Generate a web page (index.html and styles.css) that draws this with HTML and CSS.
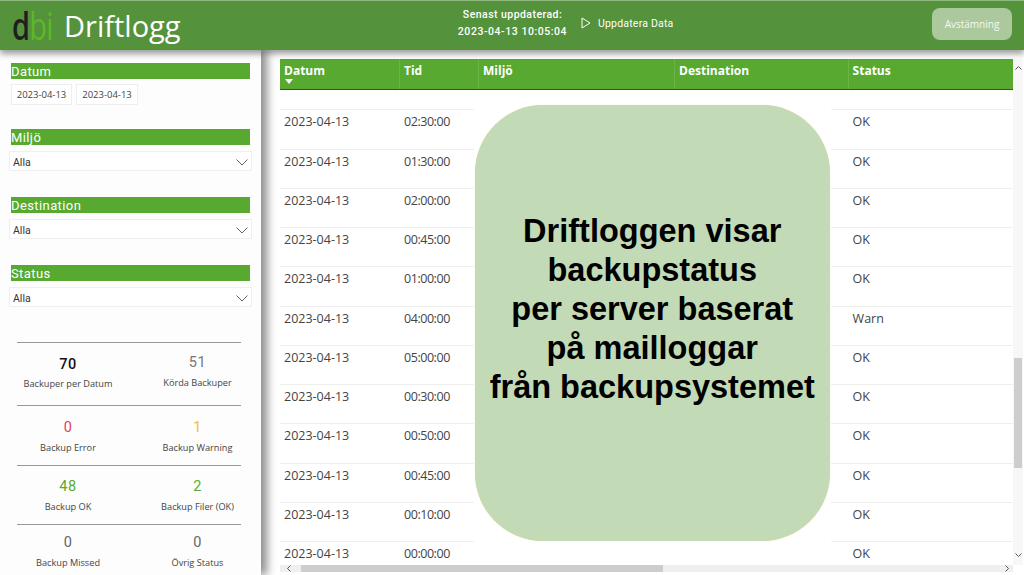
FILE: index.html
```html
<!DOCTYPE html>
<html lang="sv">
<head>
<meta charset="utf-8">
<title>Driftlogg</title>
<link rel="stylesheet" href="styles.css">
</head>
<body>
<header class="topbar">
  <div class="brand">
    <span class="logo"><span class="logo-inner"><span class="logo-d">d</span><span class="logo-bi">bi</span></span></span>
    <span class="title">Driftlogg</span>
  </div>
  <div class="updated">
    <div>Senast uppdaterad:</div>
    <div class="stamp">2023-04-13 10:05:04</div>
  </div>
  <div class="refresh">
    <svg class="play" width="10" height="12" viewBox="0 0 10 12"><path d="M1 1 L9 6 L1 11 Z" fill="none" stroke="#fff" stroke-width="1"/></svg>
    <span>Uppdatera Data</span>
  </div>
  <div class="recon">Avstämning</div>
</header>
<div class="content">
  <aside class="sidebar">
    <div class="slicer-title first">Datum</div>
    <div class="dates"><span class="date">2023-04-13</span><span class="date">2023-04-13</span></div>
    <div class="slicer-title miljo">Miljö</div>
    <div class="drop"><span>Alla</span><svg width="12" height="7" viewBox="0 0 12 7"><path d="M.5 .5 L6 6 L11.5 .5" fill="none" stroke="#666"/></svg></div>
    <div class="slicer-title next">Destination</div>
    <div class="drop"><span>Alla</span><svg width="12" height="7" viewBox="0 0 12 7"><path d="M.5 .5 L6 6 L11.5 .5" fill="none" stroke="#666"/></svg></div>
    <div class="slicer-title next">Status</div>
    <div class="drop"><span>Alla</span><svg width="12" height="7" viewBox="0 0 12 7"><path d="M.5 .5 L6 6 L11.5 .5" fill="none" stroke="#666"/></svg></div>
    <div class="kpis">
      <div class="kpi-row r1">
        <div class="kpi"><b class="v-black">70</b><span>Backuper per Datum</span></div>
        <div class="kpi"><b class="v-gray">51</b><span>Körda Backuper</span></div>
      </div>
      <div class="kpi-row r2">
        <div class="kpi"><b class="v-red">0</b><span>Backup Error</span></div>
        <div class="kpi"><b class="v-yellow">1</b><span>Backup Warning</span></div>
      </div>
      <div class="kpi-row r3">
        <div class="kpi"><b class="v-green">48</b><span>Backup OK</span></div>
        <div class="kpi"><b class="v-green">2</b><span>Backup Filer (OK)</span></div>
      </div>
      <div class="kpi-row r4">
        <div class="kpi"><b class="v-dark">0</b><span>Backup Missed</span></div>
        <div class="kpi"><b class="v-dark">0</b><span>Övrig Status</span></div>
      </div>
    </div>
  </aside>
  <main class="main">
    <div class="tablewrap">
      <div class="table">
        <div class="thead">
          <div class="th th-date">Datum<i class="sort"></i></div>
          <div class="th">Tid</div>
          <div class="th">Miljö</div>
          <div class="th">Destination</div>
          <div class="th">Status</div>
        </div>
        <div class="tbody">
          <div class="tr"><span>2023-04-13</span><span>02:30:00</span><span></span><span></span><span>OK</span></div>
          <div class="tr"><span>2023-04-13</span><span>01:30:00</span><span></span><span></span><span>OK</span></div>
          <div class="tr"><span>2023-04-13</span><span>02:00:00</span><span></span><span></span><span>OK</span></div>
          <div class="tr"><span>2023-04-13</span><span>00:45:00</span><span></span><span></span><span>OK</span></div>
          <div class="tr"><span>2023-04-13</span><span>01:00:00</span><span></span><span></span><span>OK</span></div>
          <div class="tr"><span>2023-04-13</span><span>04:00:00</span><span></span><span></span><span>Warn</span></div>
          <div class="tr"><span>2023-04-13</span><span>05:00:00</span><span></span><span></span><span>OK</span></div>
          <div class="tr"><span>2023-04-13</span><span>00:30:00</span><span></span><span></span><span>OK</span></div>
          <div class="tr"><span>2023-04-13</span><span>00:50:00</span><span></span><span></span><span>OK</span></div>
          <div class="tr"><span>2023-04-13</span><span>00:45:00</span><span></span><span></span><span>OK</span></div>
          <div class="tr"><span>2023-04-13</span><span>00:10:00</span><span></span><span></span><span>OK</span></div>
          <div class="tr"><span>2023-04-13</span><span>00:00:00</span><span></span><span></span><span>OK</span></div>
        </div>
      </div>
      <div class="vscroll">
        <svg class="arrow-up" width="7" height="4" viewBox="0 0 7 4"><path d="M.5 3.5 L3.5 .5 L6.5 3.5" fill="none" stroke="#555"/></svg>
        <div class="vthumb"></div>
        <svg class="arrow-down" width="7" height="4" viewBox="0 0 7 4"><path d="M.5 .5 L3.5 3.5 L6.5 .5" fill="none" stroke="#555"/></svg>
      </div>
    </div>
    <div class="hscroll">
      <svg width="4" height="7" viewBox="0 0 4 7"><path d="M3.5 .5 L.5 3.5 L3.5 6.5" fill="none" stroke="#555"/></svg>
      <div class="hthumb"></div>
      <svg width="4" height="7" viewBox="0 0 4 7"><path d="M.5 .5 L3.5 3.5 L.5 6.5" fill="none" stroke="#555"/></svg>
    </div>
    <div class="mask">
      <div class="callout">Driftloggen visar<br>backupstatus<br>per server baserat<br>på mailloggar<br>från backupsystemet</div>
    </div>
  </main>
</div>
</body>
</html>
```
FILE: styles.css
```css
* { box-sizing: border-box; }
html, body { margin: 0; height: 100%; }
body {
  width: 1024px; height: 575px; overflow: hidden; background: #fff;
  font-family: "Open Sans", "Liberation Sans", sans-serif; color: #333;
  display: flex; flex-direction: column;
}
.topbar {
  position: relative; z-index: 3;
  flex: 0 0 50px; height: 50px;
  display: flex; align-items: center;
  background: #54923b; border-top: 1px solid #8fb87e;
  box-shadow: 0 4px 6px rgba(0,0,0,.38);
  color: #fff;
}
.brand { width: 420px; display: flex; align-items: center; padding-left: 12px; }
.logo { width: 52px; height: 40px; display: block; }
.logo-inner {
  display: inline-block; font-size: 38px; line-height: 38px; letter-spacing: -1px;
  transform: scaleX(.76); transform-origin: left center;
}
.logo-d { color: #1f1f1f; font-weight: 600; }
.logo-bi { color: #5cb82a; font-weight: 400; }
.title { font-size: 29px; line-height: 40px; }
.updated {
  width: 125px; margin-left: 30px; text-align: center; margin-top: -6px;
  font-family: Roboto, sans-serif; font-size: 10.5px; font-weight: 500; line-height: 17px; letter-spacing: .45px;
}
.stamp { letter-spacing: .55px; }
.refresh { margin-left: 6px; display: flex; align-items: center; gap: 7px; font-family: Roboto, sans-serif; font-size: 10.5px; letter-spacing: .2px; margin-top: -5px; }
.recon {
  margin-left: auto; margin-right: 12px;
  width: 80px; height: 32px; border-radius: 8px; background: #abc99d;
  color: #f4f8f1; font-size: 10px; display: flex; align-items: center; justify-content: center; margin-top: -4px;
}
.content { flex: 1; display: flex; min-height: 0; }
.sidebar {
  position: relative; z-index: 2;
  flex: 0 0 260px; background: #fdfdfd; padding: 13px 9px 0 11px;
  box-shadow: 6px 0 9px rgba(0,0,0,.45);
  font-family: Roboto, sans-serif;
}
.slicer-title {
  height: 16px; width: 239px; background: #57a92f; color: #fff;
  font-size: 13px; line-height: 17px; letter-spacing: .4px; font-weight: 400; overflow: hidden;
}
.dates { display: flex; gap: 4px; margin-top: 5px; }
.date {
  height: 21px; width: 61px; border: 1px solid #eee; background: #fff;
  font-family: "Open Sans", sans-serif; font-size: 9.5px; line-height: 19px; text-align: center; color: #444;
}
.date + .date { width: 62px; }
.miljo { margin-top: 24px; }
.next { margin-top: 26px; }
.drop {
  margin: 6px 0 0 -2px; width: 243px; height: 20px; background: #fff; border: 1px solid #efefef;
  display: flex; align-items: center; justify-content: space-between; padding: 2px 3px 0 3px;
  font-size: 10.5px; color: #333;
}
.kpis { margin: 35px 0 0 6px; width: 224px; }
.kpi-row { display: grid; grid-template-columns: 102px 1fr; border-top: 1px solid #999; }
.r1 { height: 63px; padding-top: 12px; }
.r2 { height: 60px; padding-top: 12px; }
.r3 { height: 59px; padding-top: 11px; }
.r4 { padding-top: 8px; }
.kpi { display: flex; flex-direction: column; align-items: center; white-space: nowrap; }
.kpi + .kpi { padding-left: 35px; }
.kpi b { font-size: 14.5px; line-height: 20px; font-weight: 400; letter-spacing: .5px; }
.kpi span { font-family: "Open Sans", sans-serif; font-size: 9.2px; line-height: 14px; margin-top: 2px; color: #444; }
.r2 .kpi span, .r3 .kpi span, .r4 .kpi span { margin-top: 3px; }
.kpi b.v-black { color: #111; font-weight: 500; }
.kpi b.v-gray { color: #777; margin: -2px 0 1px; }
.v-red { color: #e0435c; }
.v-yellow { color: #edc02f; }
.v-green { color: #5aa930; }
.v-dark { color: #666; }
.main { position: relative; flex: 1; padding: 9px 1px 3px 19px; display: flex; flex-direction: column; min-width: 0; background: #fff; }
.tablewrap { flex: 1; min-height: 0; display: flex; }
.table { flex: 1; min-width: 0; overflow: hidden; }
.thead {
  height: 31px; background: #57a92f; border-bottom: 1.5px solid #3d4d35;
  display: grid; grid-template-columns: 120px 79px 196px 173.6px 1fr;
  color: #fff; font-size: 12px; font-weight: 700;
}
.th { padding: 3px 0 0 4px; line-height: 17px; border-right: 1px solid #6bb446; position: relative; }
.th:last-child { border-right: 0; }
.sort {
  position: absolute; left: 5px; top: 20px; width: 0; height: 0;
  border-left: 4.5px solid transparent; border-right: 4.5px solid transparent; border-top: 5px solid #fff;
}
.tbody { padding-top: 19.4px; }
.tr {
  height: 39.25px; border-top: 1.5px solid #efefef;
  display: grid; grid-template-columns: 120px 79px 196px 173.6px 1fr;
  font-size: 12.5px; line-height: 20px; color: #444;
}
.tr span { padding: 2px 0 0 4px; }
.tr span:nth-child(2) { letter-spacing: -.45px; }
.vscroll { flex: 0 0 10px; position: relative; background: #f7f7f7; display: flex; flex-direction: column; align-items: center; }
.arrow-up { position: absolute; top: 7px; left: 2px; }
.arrow-down { position: absolute; bottom: 8px; left: 2px; }
.vthumb { position: absolute; top: 299px; left: 1px; width: 8px; height: 110px; background: #cdcdcd; }
.hscroll { flex: 0 0 7px; margin-right: 10px; background: #efefef; display: flex; align-items: center; justify-content: space-between; padding: 0 4px 0 7px; position: relative; }
.hthumb { position: absolute; left: 21px; width: 362px; top: 0; bottom: 0; background: #cdcdcd; }
.mask { position: absolute; left: 213px; top: 40px; width: 356.5px; height: 475px; background: #fff; padding-top: 15px; }
.callout {
  height: 436px; margin-left: 1px; width: 354.5px; border-radius: 68px; background: #c3dab7; box-shadow: 0 0 1px #e8d98a;
  display: flex; align-items: center; justify-content: center; text-align: center; padding-bottom: 28px;
  font-family: "Liberation Sans", Arial, sans-serif; font-weight: 700; font-size: 32.5px; line-height: 39px; color: #000;
}
```
